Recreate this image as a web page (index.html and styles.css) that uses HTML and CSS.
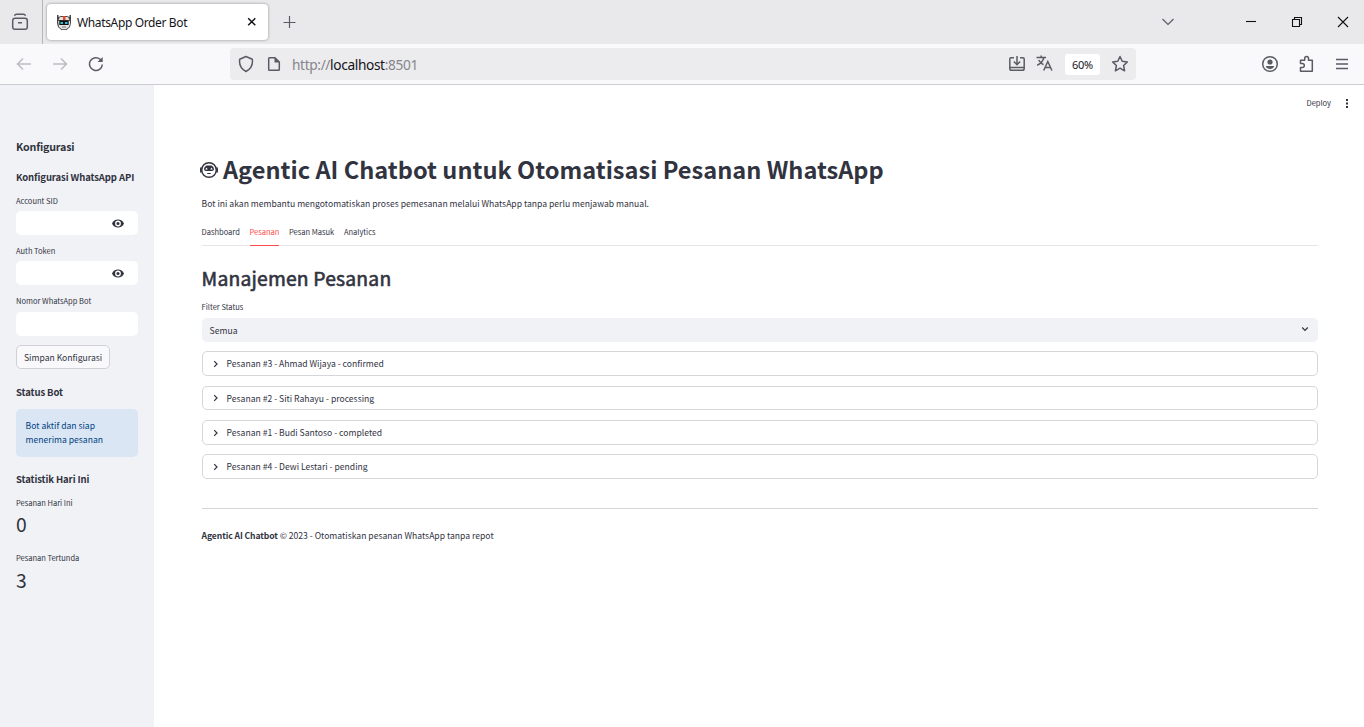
FILE: index.html
```html
<!DOCTYPE html>
<html lang="id">
<head>
<meta charset="utf-8">
<title>WhatsApp Order Bot</title>
<link rel="stylesheet" href="styles.css">
</head>
<body>
<div class="window">
  <header class="tabbar">
    <div class="tabbar-left">
      <svg class="ic" width="20" height="20" viewBox="0 0 20 20"><path d="M4.500 3.700Q5 2.300 6.500 2.300H13.500Q15 2.300 15.500 3.700M5 6.200H15A2.300 2.300 0 0 1 17.300 8.500V15A2.300 2.300 0 0 1 15 17.300H5A2.300 2.300 0 0 1 2.700 15V8.500A2.300 2.300 0 0 1 5 6.200ZM8 10.700H12"/></svg>
    </div>
    <div class="tab">
      <svg class="favicon" width="16" height="17" viewBox="0 0 16 17"><path fill="#444" d="M1 1H2.500V3L5 2H11L13.500 3V1H15V9L14 13L10.500 16H5.500L2 13L1 9Z"/><path fill="#e2e2e2" d="M4 3H12L13.500 6H2.500ZM2 7H3.500V11H12.500V7H14V10L13 13L10 15.200H6L3 13Z"/><path fill="#e5452b" d="M7 2H9.500V6H7Z"/><path fill="#111" d="M3.500 6.500H12.500V11H3.500Z"/><path fill="#35bdd0" d="M4.500 8H7V10H4.500ZM9 8H11.500V10H9Z"/><path fill="#777" d="M6 12.500H10V13.500H6Z"/></svg>
      <span class="tab-title">WhatsApp Order Bot</span>
      <svg class="ic black" width="10" height="10" viewBox="0 0 10 10"><path d="M1.200 1.200L8.300 8.300M8.300 1.200L1.200 8.300"/></svg>
    </div>
    <svg class="ic plus" width="14" height="14" viewBox="0 0 14 14"><path d="M6.500 1V13M.5 7.500H12.500"/></svg>
    <div class="win-controls">
      <svg class="ic chevron" width="14" height="10" viewBox="0 0 14 10"><path d="M1.500 3L7 8.500L12.500 3"/></svg>
      <svg class="ic dark minimise" width="12" height="12" viewBox="0 0 12 12"><path d="M1 5.500H11"/></svg>
      <svg class="ic dark restore" width="12" height="12" viewBox="0 0 12 12"><path d="M1.500 3.500H8.500V10.500H1.500ZM3.500 3.500V1.500H10.500V8.500H8.500"/></svg>
      <svg class="ic dark close" width="12" height="12" viewBox="0 0 12 12"><path d="M1 1L11 11M11 1L1 11"/></svg>
    </div>
  </header>
  <nav class="toolbar">
    <div class="nav-buttons">
      <svg class="ic faded" width="16" height="16" viewBox="0 0 16 16"><path d="M15 8H1.500M7 2.500L1.500 8L7 13.500"/></svg>
      <svg class="ic faded" width="16" height="16" viewBox="0 0 16 16"><path d="M1 8H14.500M9 2.500L14.500 8L9 13.500"/></svg>
      <svg class="ic" width="16" height="16" viewBox="0 0 16 16"><path d="M14.300 8.500A6.400 6.400 0 1 1 12.200 3.300L13.500 4.500"/><path class="fill" d="M14.700 1V6H9.500Z"/></svg>
    </div>
    <div class="urlbar">
      <svg class="ic" width="16" height="18" viewBox="0 0 16 18"><path d="M8 1.500L14.300 4.300Q15.500 12.500 8 16.500Q.5 12.500 1.700 4.300Z" stroke-linejoin="round"/></svg>
      <svg class="ic page" width="14" height="16" viewBox="0 0 14 16"><path d="M2.500 1.700H8L12.300 6V13.500Q12.300 14.300 11.500 14.300H2.500Q1.700 14.300 1.700 13.500V2.500Q1.700 1.700 2.500 1.700Z"/><path class="fill" d="M7.500 1.500V6.500H12.500Z"/></svg>
      <span class="url">http://<b>localhost</b>:8501</span>
      <div class="url-actions">
        <svg class="ic" width="18" height="16" viewBox="0 0 18 16"><path d="M6 1.800H3Q1.800 1.800 1.800 3V12.500Q1.800 14.300 3.500 14.300H14.500Q16.200 14.300 16.200 12.500V3Q16.200 1.800 15 1.800H12M2 11.500H16M9 0V8M5.800 5.500L9 8.700L12.200 5.500"/></svg>
        <svg class="ic translate" width="17" height="17" viewBox="0 0 17 17"><path d="M.5 2.500H10M5.200 .5V2.500M7.900 2.500Q6.500 8 1.200 10.200M2.700 5Q4.500 8.500 7.500 9.700M7.700 15.500L11.800 6.500L15.900 15.500M9.300 12.500H14.400"/></svg>
        <span class="zoom">60%</span>
        <svg class="ic" width="18" height="18" viewBox="0 0 18 18"><path stroke-linejoin="round" d="M9 1.500L11.200 6.300L16.400 6.900L12.600 10.500L13.600 15.800L9 13.200L4.400 15.800L5.400 10.500L1.600 6.900L6.800 6.300Z"/></svg>
      </div>
    </div>
    <div class="tool-actions">
      <svg class="ic" width="18" height="18" viewBox="0 0 18 18"><circle cx="9" cy="9" r="7.300"/><circle class="fill" cx="9" cy="7" r="2.600"/><path class="fill" d="M4.800 11H13.200Q12.300 14 9 14Q5.700 14 4.800 11Z"/></svg>
      <svg class="ic" width="16" height="18" viewBox="0 0 16 18"><path stroke-linejoin="round" d="M1.500 16.300H13.300V5.200H9.500V3.500A1.900 1.900 0 0 0 5.700 3.500V5.200H1.500V8.500H3.300A2 2 0 0 1 3.300 12.500H1.500Z"/></svg>
      <svg class="ic" width="14" height="12" viewBox="0 0 14 12"><path d="M1 1.500H13M1 6H13M1 10.500H13"/></svg>
    </div>
  </nav>
  <div class="app">
    <aside class="sidebar">
      <h2 class="side-title">Konfigurasi</h2>
      <h3 class="side-heading api">Konfigurasi WhatsApp API</h3>
      <label class="label">Account SID</label>
      <div class="input"><svg width="12" height="9" viewBox="0 0 12 9"><path fill="#31333f" fill-rule="evenodd" d="M6 .5C3.300 .5 1 2.100 0 4.500C1 6.900 3.300 8.500 6 8.500S11 6.900 12 4.500C11 2.100 8.700 .5 6 .5ZM6 1.600A2.900 2.900 0 1 1 6 7.400A2.900 2.900 0 1 1 6 1.600ZM6 2.900A1.600 1.600 0 1 0 6 6.100A1.600 1.600 0 1 0 6 2.900Z"/></svg></div>
      <label class="label">Auth Token</label>
      <div class="input"><svg width="12" height="9" viewBox="0 0 12 9"><path fill="#31333f" fill-rule="evenodd" d="M6 .5C3.300 .5 1 2.100 0 4.500C1 6.900 3.300 8.500 6 8.500S11 6.900 12 4.500C11 2.100 8.700 .5 6 .5ZM6 1.600A2.900 2.900 0 1 1 6 7.400A2.900 2.900 0 1 1 6 1.600ZM6 2.900A1.600 1.600 0 1 0 6 6.100A1.600 1.600 0 1 0 6 2.900Z"/></svg></div>
      <label class="label last">Nomor WhatsApp Bot</label>
      <div class="input last"></div>
      <button class="button">Simpan Konfigurasi</button>
      <h3 class="side-heading">Status Bot</h3>
      <div class="alert">Bot aktif dan siap<br>menerima pesanan</div>
      <h3 class="side-heading stats">Statistik Hari Ini</h3>
      <div class="metric"><span class="metric-label">Pesanan Hari Ini</span><span class="metric-value">0</span></div>
      <div class="metric"><span class="metric-label">Pesanan Tertunda</span><span class="metric-value">3</span></div>
    </aside>
    <main class="main">
      <div class="deploy"><span>Deploy</span><svg width="4" height="9" viewBox="0 0 4 9"><path fill="#31333f" d="M1 0H3V2H1ZM1 3.500H3V5.500H1ZM1 7H3V9H1Z"/></svg></div>
      <h1 class="title"><svg width="18" height="18" viewBox="0 0 18 18"><circle cx="9" cy="9" r="7.300" fill="none" stroke="#31333f" stroke-width="1.500"/><path d="M.8 6.500V11.500M17.200 6.500V11.500" stroke="#31333f" stroke-width="1.500"/><path fill="#31333f" fill-rule="evenodd" d="M6.500 4.500H11.500Q14 5.500 14 8Q14 10 12 10H6Q4 10 4 8Q4 5.500 6.500 4.500ZM6.500 6.500L5.200 8.500H7.800ZM11.500 6.500L10.200 8.500H12.800ZM7.300 12H10.700V13H7.300Z"/></svg><span>Agentic AI Chatbot untuk Otomatisasi Pesanan WhatsApp</span></h1>
      <p class="intro">Bot ini akan membantu mengotomatiskan proses pemesanan melalui WhatsApp tanpa perlu menjawab manual.</p>
      <div class="tabs"><span>Dashboard</span><span class="active">Pesanan</span><span>Pesan Masuk</span><span>Analytics</span></div>
      <h2 class="subtitle">Manajemen Pesanan</h2>
      <label class="label filter">Filter Status</label>
      <div class="select"><span>Semua</span><svg width="8" height="6" viewBox="0 0 8 6"><path d="M1.200 1.500L4 4.300L6.800 1.500"/></svg></div>
      <div class="orders">
        <div class="order"><svg width="6" height="8" viewBox="0 0 6 8"><path d="M1.200 1.200L4 4L1.200 6.800"/></svg><span>Pesanan #3 - Ahmad Wijaya - confirmed</span></div>
        <div class="order short"><svg width="6" height="8" viewBox="0 0 6 8"><path d="M1.200 1.200L4 4L1.200 6.800"/></svg><span>Pesanan #2 - Siti Rahayu - processing</span></div>
        <div class="order"><svg width="6" height="8" viewBox="0 0 6 8"><path d="M1.200 1.200L4 4L1.200 6.800"/></svg><span>Pesanan #1 - Budi Santoso - completed</span></div>
        <div class="order"><svg width="6" height="8" viewBox="0 0 6 8"><path d="M1.200 1.200L4 4L1.200 6.800"/></svg><span>Pesanan #4 - Dewi Lestari - pending</span></div>
      </div>
      <footer class="footer"><b>Agentic AI Chatbot</b> © 2023 - Otomatiskan pesanan WhatsApp tanpa repot</footer>
    </main>
  </div>
</div>
</body>
</html>
```
FILE: styles.css
```css
* { box-sizing: border-box; }
body { margin: 0; overflow: hidden; font-family: "Noto Sans CJK SC", "Noto Sans", sans-serif; color: #31333f; background: #fff; }
h1, h2, h3, p { margin: 0; }
svg { display: block; flex: none; }
.window { width: 1364px; height: 727px; display: flex; flex-direction: column; }

.ic { fill: none; stroke: #5b5b66; stroke-width: 1.5; }
.ic .fill { fill: #5b5b66; stroke: none; }
.ic.faded { stroke: #bcbcc2; }
.ic.black { stroke: #15141a; }
.ic.dark { stroke: #111; stroke-width: 1.1; }

.tabbar { height: 44px; flex: none; display: flex; background: #e9e9eb; }
.tabbar-left { width: 43px; padding: 12px 0 0 10px; border-right: 1px solid #b5b5ba; }
.tab { width: 221px; height: 36px; margin: 4px 0 0 4px; padding: 0 11px 0 9px; display: flex; align-items: center; background: #fff; border-radius: 4px; box-shadow: 0 0 3px rgba(0,0,0,.4); }
.tab-title { flex: 1; margin: 1px 0 0 5px; font: 12px "Noto Sans", sans-serif; letter-spacing: -.36px; color: #15141a; white-space: nowrap; }
.ic.plus { margin: 15px 0 0 15px; stroke-width: 1.2; }
.win-controls { flex: 1; display: flex; justify-content: flex-end; padding: 16px 15px 0 0; }
.ic.chevron { stroke-width: 1.2; }
.minimise { margin-left: 70px; }
.restore { margin-left: 34px; }
.close { margin-left: 34px; }

.toolbar { height: 41px; flex: none; display: flex; background: #f9f9fb; border-bottom: 1px solid #ccccd1; }
.nav-buttons { width: 230px; display: flex; gap: 20px; padding: 12px 0 0 16px; }
.urlbar { width: 906px; height: 32px; margin-top: 4px; padding: 0 7px 0 8px; display: flex; align-items: center; background: #ececee; border-radius: 4px; }
.page { margin-left: 13px; }
.url { margin: 2px 0 0 11px; font: 13.700px/20px "Noto Sans", sans-serif; letter-spacing: -.36px; color: #85858b; }
.url b { font-weight: 400; color: #15141a; }
.url-actions { margin-left: auto; display: flex; align-items: center; }
.translate { margin: -1px 0 0 10px; }
.zoom { width: 35px; height: 21px; margin: 0 11px 0 12px; background: #fff; border-radius: 3px; font: 11px/21px "Noto Sans", sans-serif; letter-spacing: -.2px; color: #15141a; text-align: center; }
.tool-actions { flex: 1; display: flex; justify-content: flex-end; align-items: center; gap: 20px; padding: 0 15px 1px 0; }

.app { flex: 1; display: flex; }
.sidebar { width: 154px; padding: 54px 16px 0; background: #f0f2f6; white-space: nowrap; }
.side-title { font-size: 10.700px; line-height: 16px; font-weight: 600; letter-spacing: -.18px; }
.side-heading { font-size: 9.500px; line-height: 14px; font-weight: 600; letter-spacing: -.1px; }
.side-heading.api { margin: 15px 0 10px; }
.label { display: block; font-size: 7.500px; line-height: 14px; }
.label.last { margin-bottom: 4px; }
.input { height: 24px; margin: 3px 0 9px; padding: 8px 14px; display: flex; justify-content: flex-end; background: #fff; border-radius: 5px; }
.label.last + .input.last { margin: 0 0 9px; }
.button { display: block; height: 24px; padding: 0 7px; font: 8.600px/20px "Noto Sans CJK SC", sans-serif; color: #31333f; background: #f9f9fb; border: 1px solid #d0d1d6; border-radius: 5px; margin-bottom: 16px; }
.alert { height: 48px; margin: 10px 0 15px; padding: 9px 9.600px; font-size: 8.600px; line-height: 14px; color: #004280; background: #dae6f4; border-radius: 5px; }
.stats { margin-bottom: 10px; }
.metric { height: 55px; }
.metric-label, .metric-value { display: block; }
.metric-label { font-size: 7.500px; line-height: 14px; }
.metric-value { font-size: 19.300px; line-height: 28px; }
.metric + .metric .metric-value { line-height: 30px; }

.main { flex: 1; padding: 11px 46px 0 47.600px; }
.deploy { height: 14px; margin-right: -31px; display: flex; justify-content: flex-end; align-items: center; gap: 14px; font-size: 7.500px; line-height: 14px; }
.deploy span { margin-top: -1px; }
.title { height: 36px; margin-top: 41px; display: flex; align-items: center; gap: 5px; font-size: 23.600px; line-height: 36px; font-weight: 700; white-space: nowrap; }
.title svg { margin: 1px 0 0 -1.600px; }
.intro { margin-top: 8px; font-size: 8.600px; line-height: 16px; }
.tabs { height: 25px; margin-top: 10px; display: flex; gap: 9.700px; font-size: 7.500px; line-height: 21px; border-bottom: 1px solid #e6e6e8; }
.tabs .active { height: 25px; color: #ff4b4b; border-bottom: 1px solid #ff4b4b; }
.subtitle { margin-top: 16px; font-size: 19.300px; line-height: 32px; font-weight: 400; -webkit-text-stroke: .6px #31333f; letter-spacing: .2px; }
.filter { margin: 6px 0 4px; }
.select { height: 24px; padding: 0 9px 0 8px; display: flex; align-items: center; justify-content: space-between; font-size: 8.600px; background: #f0f2f6; border-radius: 5px; }
.select svg { margin-top: -2px; }
.select svg, .order svg { fill: none; stroke: #31333f; stroke-width: 1.2; }
.orders { margin-top: 9px; display: grid; gap: 10px; }
.order { height: 25px; padding-left: 10px; display: flex; align-items: center; gap: 8px; font-size: 8.600px; line-height: 23px; border: 1px solid #d5d6d9; border-radius: 5px; }
.order:last-child { margin-top: -1px; }
.order.short { height: 24px; line-height: 22px; }
.footer { margin-top: 29px; padding-top: 18px; border-top: 1px solid #d5d6d9; font-size: 8.600px; line-height: 16px; }
.footer b { letter-spacing: -.1px; }
```
